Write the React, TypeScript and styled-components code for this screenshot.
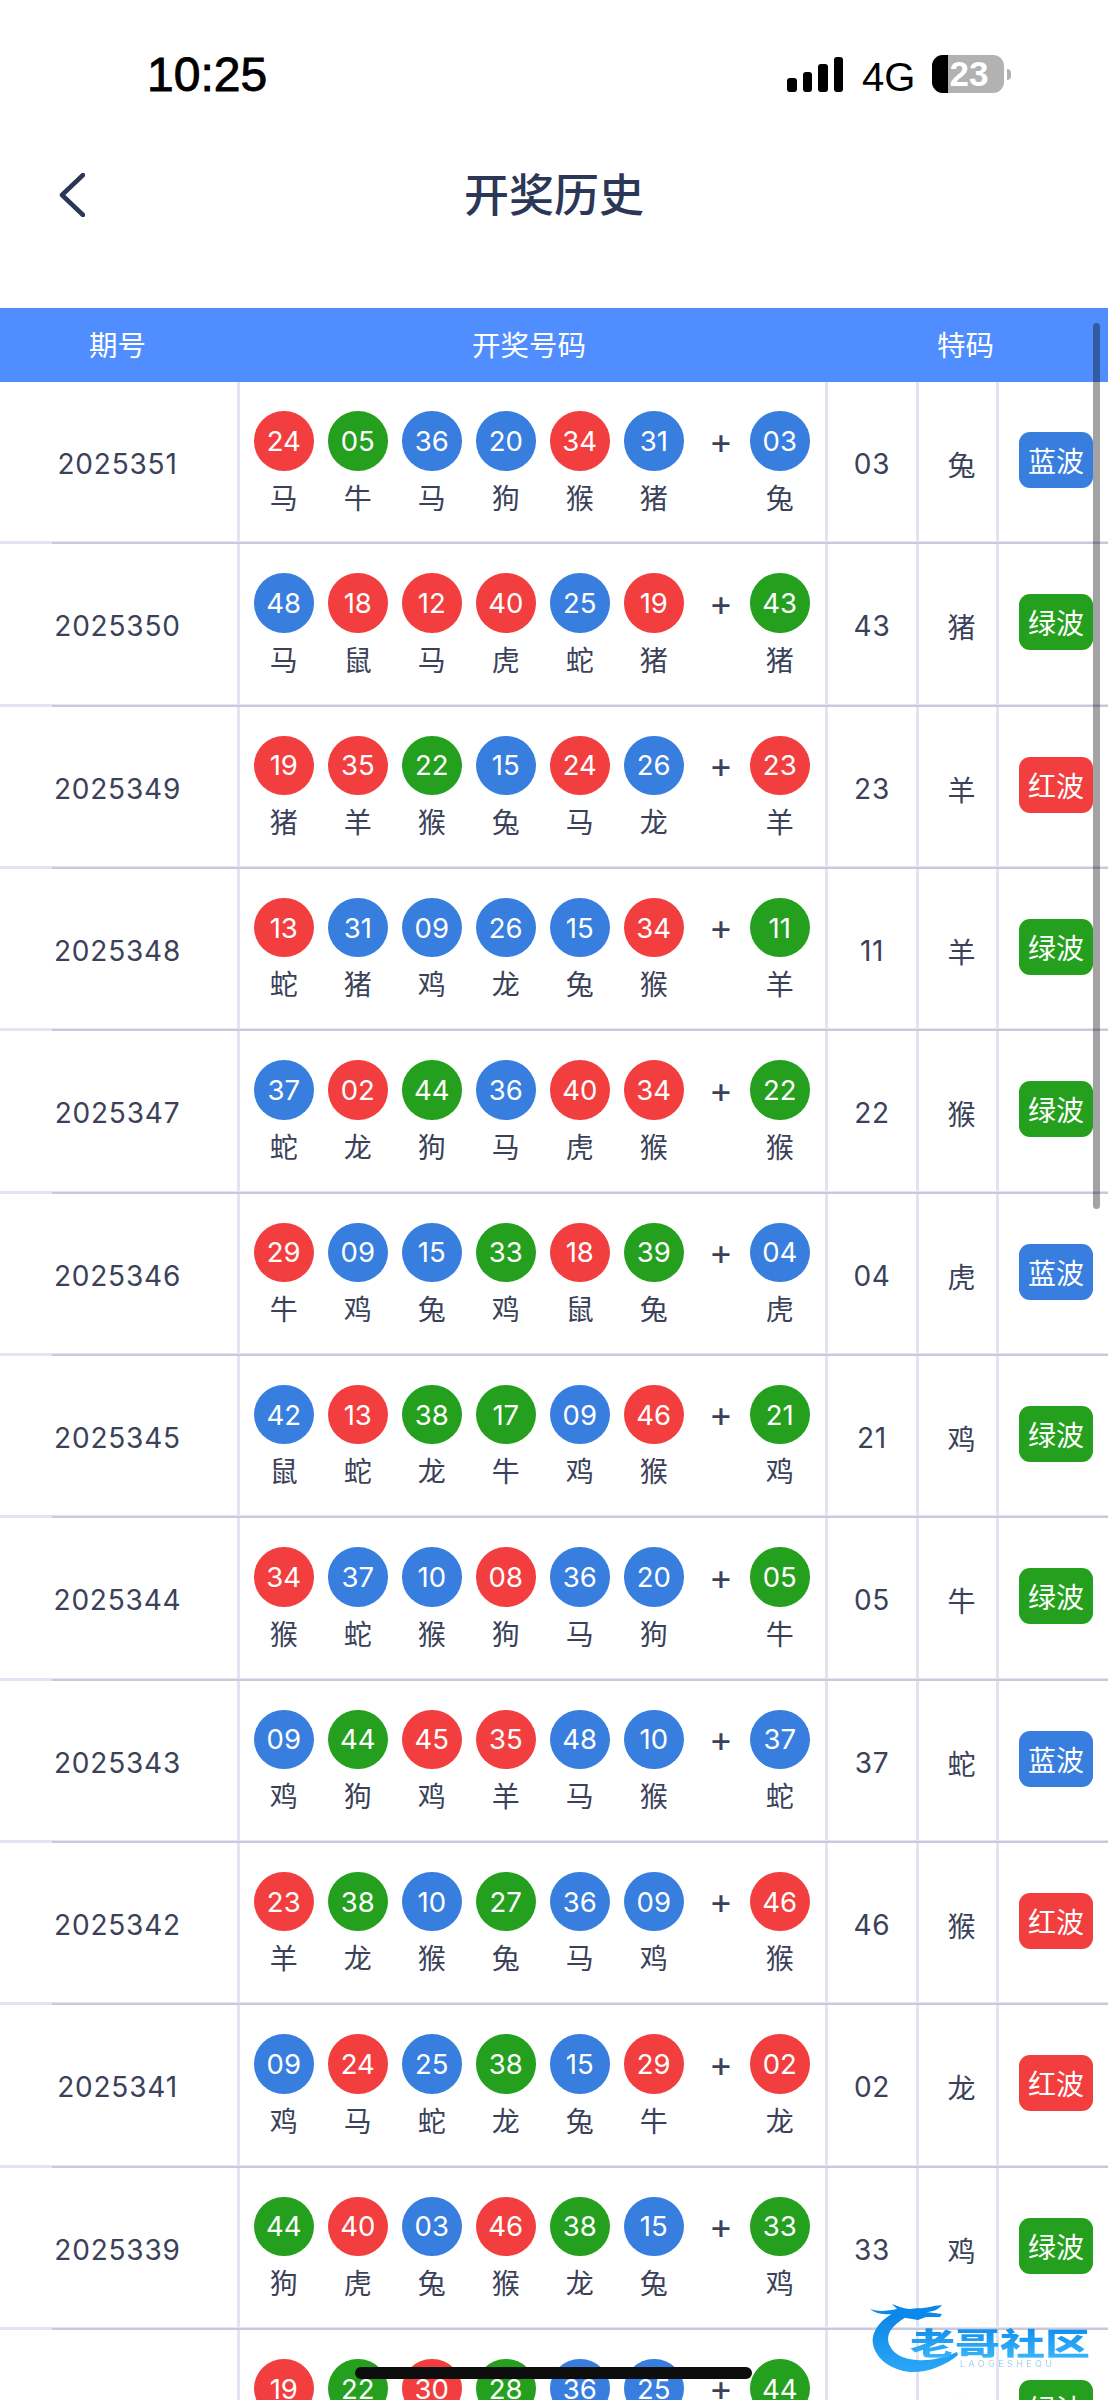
import styled, { createGlobalStyle } from 'styled-components'

type Tone = 'r' | 'g' | 'b'

const toneColor: Record<Tone, string> = {
  r: '#f23e3f',
  g: '#24a01e',
  b: '#377edf',
}

const waveTone: Record<string, Tone> = {
  红波: 'r',
  绿波: 'g',
  蓝波: 'b',
}

type Draw = {
  period: string
  balls: string
  zodiac: string
  special: string
  specialZodiac: string
  wave: string
}

// balls: number + tone letter, the last one is the special ball
const draws: Draw[] = [
  { period: '2025351', balls: '24r 05g 36b 20b 34r 31b 03b', zodiac: '马牛马狗猴猪兔', special: '03', specialZodiac: '兔', wave: '蓝波' },
  { period: '2025350', balls: '48b 18r 12r 40r 25b 19r 43g', zodiac: '马鼠马虎蛇猪猪', special: '43', specialZodiac: '猪', wave: '绿波' },
  { period: '2025349', balls: '19r 35r 22g 15b 24r 26b 23r', zodiac: '猪羊猴兔马龙羊', special: '23', specialZodiac: '羊', wave: '红波' },
  { period: '2025348', balls: '13r 31b 09b 26b 15b 34r 11g', zodiac: '蛇猪鸡龙兔猴羊', special: '11', specialZodiac: '羊', wave: '绿波' },
  { period: '2025347', balls: '37b 02r 44g 36b 40r 34r 22g', zodiac: '蛇龙狗马虎猴猴', special: '22', specialZodiac: '猴', wave: '绿波' },
  { period: '2025346', balls: '29r 09b 15b 33g 18r 39g 04b', zodiac: '牛鸡兔鸡鼠兔虎', special: '04', specialZodiac: '虎', wave: '蓝波' },
  { period: '2025345', balls: '42b 13r 38g 17g 09b 46r 21g', zodiac: '鼠蛇龙牛鸡猴鸡', special: '21', specialZodiac: '鸡', wave: '绿波' },
  { period: '2025344', balls: '34r 37b 10b 08r 36b 20b 05g', zodiac: '猴蛇猴狗马狗牛', special: '05', specialZodiac: '牛', wave: '绿波' },
  { period: '2025343', balls: '09b 44g 45r 35r 48b 10b 37b', zodiac: '鸡狗鸡羊马猴蛇', special: '37', specialZodiac: '蛇', wave: '蓝波' },
  { period: '2025342', balls: '23r 38g 10b 27g 36b 09b 46r', zodiac: '羊龙猴兔马鸡猴', special: '46', specialZodiac: '猴', wave: '红波' },
  { period: '2025341', balls: '09b 24r 25b 38g 15b 29r 02r', zodiac: '鸡马蛇龙兔牛龙', special: '02', specialZodiac: '龙', wave: '红波' },
  { period: '2025339', balls: '44g 40r 03b 46r 38g 15b 33g', zodiac: '狗虎兔猴龙兔鸡', special: '33', specialZodiac: '鸡', wave: '绿波' },
  { period: '2025338', balls: '19r 22g 30r 28g 36b 25b 44g', zodiac: '猪猴鼠虎马蛇狗', special: '44', specialZodiac: '狗', wave: '绿波' },
]

const App = () => {
  return (
    <Screen>
      <GlobalStyle />
      <StatusBar>
        <Clock>10:25</Clock>
        <StatusIcons>
          <SignalBars>
            <Bar $h={14} />
            <Bar $h={20} />
            <Bar $h={28} />
            <Bar $h={35} />
          </SignalBars>
          <Network>4G</Network>
          <Battery>
            <BatteryBody>
              <BatteryLevel />
              <BatteryText>23</BatteryText>
            </BatteryBody>
            <BatteryNub />
          </Battery>
        </StatusIcons>
      </StatusBar>

      <NavBar>
        <BackIcon width="26" height="44" viewBox="0 0 26 44" fill="none">
          <path d="M24 2 L3 22 L24 42" stroke="#2c3757" strokeWidth="4.5" strokeLinecap="round" strokeLinejoin="round" />
        </BackIcon>
        <Title>开奖历史</Title>
      </NavBar>

      <TableHead>
        <HeadCell $w={235}>期号</HeadCell>
        <HeadCell $w={588}>开奖号码</HeadCell>
        <HeadCell $w={285}>特码</HeadCell>
      </TableHead>

      <TableBody>
        {draws.map((draw) => {
          const balls = draw.balls.split(' ')
          const zodiac = [...draw.zodiac]
          return (
            <Row key={draw.period}>
              <PeriodCell>{draw.period}</PeriodCell>
              <BallsCell>
                {balls.map((ball, i) => (
                  <BallColumn key={i}>
                    {i === 6 && <Plus>+</Plus>}
                    <BallStack>
                      <Ball $tone={ball[2] as Tone}>{ball.slice(0, 2)}</Ball>
                      <Zodiac>{zodiac[i]}</Zodiac>
                    </BallStack>
                  </BallColumn>
                ))}
              </BallsCell>
              <NumberCell>{draw.special}</NumberCell>
              <ZodiacCell>{draw.specialZodiac}</ZodiacCell>
              <WaveCell>
                <WaveBadge $tone={waveTone[draw.wave]}>{draw.wave}</WaveBadge>
              </WaveCell>
            </Row>
          )
        })}
      </TableBody>

      <ScrollThumb />

      <Watermark>
        <DragonIcon width="110" height="76" viewBox="0 0 110 76" fill="none">
          <defs>
            <linearGradient id="dragonFill" x1="0" y1="0" x2="0" y2="1">
              <stop offset="0" stopColor="#0a84e8" />
              <stop offset="1" stopColor="#2aa8f5" />
            </linearGradient>
          </defs>
          {/* body */}
          <path
            d="M27 12 C12 20 3 32 5 44 C8 60 24 70 42 72 C60 73 78 65 90 55 L89 52 C76 58 62 61 49 60 C36 59 26 55 22 46 C17 36 22 26 40 16 Z"
            fill="url(#dragonFill)"
          />
          {/* head, mane and whiskers */}
          <path
            d="M2 9 C10 12 20 11 29 9 L24 4 C30 6 36 9 42 9 L50 8 C56 9 62 6 74 5 C70 10 64 12 58 12 L74 14 L72 17 L58 17 L50 20 L38 18 L27 14 C18 15 8 14 2 9 Z"
            fill="#0c88ea"
          />
        </DragonIcon>
        <LogoTitle>老哥社区</LogoTitle>
        <LogoSub>LAOGESHEQU</LogoSub>
      </Watermark>

      <HomeIndicator />
    </Screen>
  )
}

const GlobalStyle = createGlobalStyle`
  html, body {
    margin: 0;
    padding: 0;
    background: #fff;
  }
  body {
    font-family: Inter, "Noto Sans CJK SC", sans-serif;
  }
`

const Screen = styled.div`
  position: relative;
  width: 1108px;
  height: 2400px;
  overflow: hidden;
  background: #fff;
`

const StatusBar = styled.div`
  height: 150px;
  display: flex;
  align-items: flex-start;
  justify-content: space-between;
  padding: 55px 97px 0 147px;
  box-sizing: border-box;
`

const Clock = styled.div`
  font-family: "Liberation Sans", Arial, sans-serif;
  font-size: 48px;
  line-height: 40px;
  font-weight: 400;
  color: #000;
  -webkit-text-stroke: 0.9px #000;
`

const StatusIcons = styled.div`
  display: flex;
  align-items: flex-start;
`

const SignalBars = styled.div`
  display: flex;
  align-items: flex-end;
  gap: 6px;
  height: 37px;
  width: 56px;
  margin-right: 19px;
`

const Bar = styled.div<{ $h: number }>`
  width: 10px;
  height: ${(p) => p.$h}px;
  background: #000;
  border-radius: 3px;
`

const Network = styled.div`
  font-family: "Liberation Sans", Arial, sans-serif;
  font-size: 40px;
  line-height: 40px;
  color: #000;
  width: 70px;
  margin-top: 2px;
`

const Battery = styled.div`
  display: flex;
  align-items: center;
  height: 38px;
`

const BatteryBody = styled.div`
  position: relative;
  display: flex;
  align-items: center;
  justify-content: center;
  width: 72px;
  height: 38px;
  border-radius: 11px;
  background: #b2b2b2;
`

const BatteryLevel = styled.div`
  position: absolute;
  left: 0;
  top: 0;
  bottom: 0;
  width: 16px;
  border-radius: 11px 0 0 11px;
  background: #000;
`

const BatteryText = styled.span`
  position: relative;
  font-family: "Liberation Sans", Arial, sans-serif;
  font-weight: 700;
  font-size: 35px;
  line-height: 38px;
  color: #fff;
  padding-left: 2px;
`

const BatteryNub = styled.div`
  width: 4px;
  height: 11px;
  margin-left: 3px;
  background: #b2b2b2;
  border-radius: 0 4px 4px 0;
`

const NavBar = styled.div`
  position: relative;
  height: 158px;
  display: flex;
  align-items: flex-start;
  justify-content: center;
`

const BackIcon = styled.svg`
  position: absolute;
  left: 59px;
  top: 23px;
`

const Title = styled.div`
  font-family: "Noto Sans CJK SC", sans-serif;
  font-size: 45px;
  line-height: 86px;
  font-weight: 500;
  color: #2c3757;
`

const TableHead = styled.div`
  display: flex;
  height: 74px;
  background: #508dff;
`

const HeadCell = styled.div<{ $w: number }>`
  width: ${(p) => p.$w}px;
  height: 71px;
  display: flex;
  align-items: center;
  justify-content: center;
  font-family: "Noto Sans CJK SC", sans-serif;
  font-size: 28.5px;
  color: #fff;
`

const TableBody = styled.div`
  display: flex;
  flex-direction: column;
`

const Row = styled.div`
  position: relative;
  display: grid;
  grid-template-columns: 237px 591px 91px 80px 109px;
  height: 162.33px;
  box-sizing: border-box;
  border-bottom: 3px solid #e3e4f1;
  color: #3b4159;

  &::after {
    content: '';
    position: absolute;
    left: 52px;
    right: 0;
    bottom: -3px;
    height: 2px;
    background: #c9c9dc;
  }
`

const Cell = styled.div`
  display: flex;
  align-items: center;
  justify-content: center;
  border-right: 3px solid #e1e3f1;
  box-sizing: border-box;
  padding-top: 5px;
`

const PeriodCell = styled(Cell)`
  font-size: 28px;
  letter-spacing: 0.8px;
  border-right: 0;
  padding-right: 2px;
`

const BallsCell = styled(Cell)`
  justify-content: flex-start;
  align-items: flex-start;
  border-left: 3px solid #e1e3f1;
  padding: 29px 0 0 14px;
  gap: 14.5px;
`

const BallColumn = styled.div`
  display: flex;
  align-items: flex-start;
`

const Plus = styled.div`
  width: 52px;
  height: 59px;
  padding-right: 6px;
  box-sizing: border-box;
  display: flex;
  align-items: center;
  justify-content: center;
  font-size: 36px;
  font-weight: 400;
  color: #3b4159;
`

const BallStack = styled.div`
  display: flex;
  flex-direction: column;
  align-items: center;
  width: 59.5px;
`

const Ball = styled.div<{ $tone: Tone }>`
  width: 59.5px;
  height: 59.5px;
  border-radius: 50%;
  background: ${(p) => toneColor[p.$tone]};
  color: #fff;
  display: flex;
  align-items: center;
  justify-content: center;
  font-size: 27.5px;
`

const Zodiac = styled.div`
  font-family: "Noto Sans CJK SC", sans-serif;
  font-size: 28px;
  line-height: 40px;
  margin-top: 6px;
`

const NumberCell = styled(Cell)`
  font-size: 28px;
  letter-spacing: 0.7px;
`

const ZodiacCell = styled(Cell)`
  font-family: "Noto Sans CJK SC", sans-serif;
  font-size: 28px;
  padding-left: 8px;
`

const WaveCell = styled.div`
  display: flex;
  align-items: center;
  padding: 0 0 3px 20px;
`

const WaveBadge = styled.div<{ $tone: Tone }>`
  width: 74px;
  height: 56px;
  border-radius: 11px;
  background: ${(p) => toneColor[p.$tone]};
  color: #fff;
  display: flex;
  align-items: center;
  justify-content: center;
  font-family: "Noto Sans CJK SC", sans-serif;
  font-size: 28px;
`

const ScrollThumb = styled.div`
  position: absolute;
  left: 1093px;
  top: 323px;
  width: 7px;
  height: 886px;
  border-radius: 4px;
  background: rgba(0, 0, 0, 0.36);
`

const HomeIndicator = styled.div`
  position: absolute;
  left: 355px;
  top: 2367px;
  width: 397px;
  height: 12px;
  border-radius: 6px;
  background: #0d0d0d;
`

const Watermark = styled.div`
  position: absolute;
  left: 868px;
  top: 2300px;
  width: 236px;
  height: 76px;
  filter: blur(0.7px);
`

const DragonIcon = styled.svg`
  position: absolute;
  left: 0;
  top: 0;
`

const LogoTitle = styled.div`
  position: absolute;
  left: 42px;
  top: 19px;
  width: 190px;
  font-family: "Noto Sans CJK SC", sans-serif;
  font-size: 45px;
  line-height: 46px;
  font-weight: 900;
  white-space: nowrap;
  transform: scaleY(0.68);
  background: linear-gradient(#0f8dee, #38b4f8);
  -webkit-background-clip: text;
  background-clip: text;
  color: transparent;
`

const LogoSub = styled.div`
  position: absolute;
  left: 92px;
  top: 59px;
  font-family: Inter, sans-serif;
  font-size: 9px;
  line-height: 10px;
  letter-spacing: 3.4px;
  color: #a8d2f2;
  white-space: nowrap;
`

export default App
